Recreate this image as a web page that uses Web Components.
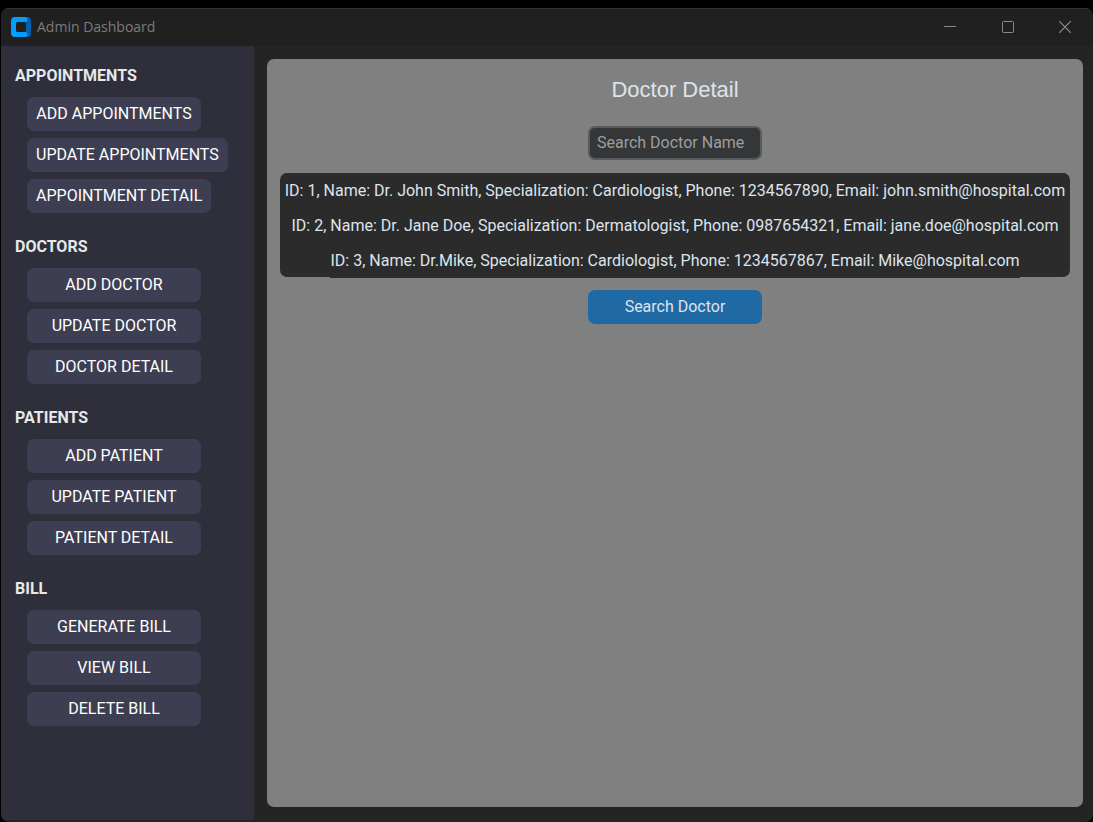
<!DOCTYPE html>
<html lang="en">
<head>
<meta charset="utf-8">
<title>Admin Dashboard</title>
<style>
  html, body { height: 100%; margin: 0; }
  body { background: #000; font-family: Roboto, "Liberation Sans", sans-serif; font-size: 16px; overflow: hidden; }
</style>
</head>
<body>
<app-window caption="Admin Dashboard">
  <side-bar slot="side">
    <nav-group heading="APPOINTMENTS">
      <nav-button>ADD APPOINTMENTS</nav-button>
      <nav-button>UPDATE APPOINTMENTS</nav-button>
      <nav-button>APPOINTMENT DETAIL</nav-button>
    </nav-group>
    <nav-group heading="DOCTORS">
      <nav-button>ADD DOCTOR</nav-button>
      <nav-button>UPDATE DOCTOR</nav-button>
      <nav-button>DOCTOR DETAIL</nav-button>
    </nav-group>
    <nav-group heading="PATIENTS">
      <nav-button>ADD PATIENT</nav-button>
      <nav-button>UPDATE PATIENT</nav-button>
      <nav-button>PATIENT DETAIL</nav-button>
    </nav-group>
    <nav-group heading="BILL">
      <nav-button>GENERATE BILL</nav-button>
      <nav-button>VIEW BILL</nav-button>
      <nav-button>DELETE BILL</nav-button>
    </nav-group>
  </side-bar>
  <doctor-panel>
    <doctor-row>ID: 1, Name: Dr. John Smith, Specialization: Cardiologist, Phone: 1234567890, Email: john.smith@hospital.com</doctor-row>
    <doctor-row>ID: 2, Name: Dr. Jane Doe, Specialization: Dermatologist, Phone: 0987654321, Email: jane.doe@hospital.com</doctor-row>
    <doctor-row>ID: 3, Name: Dr.Mike, Specialization: Cardiologist, Phone: 1234567867, Email: Mike@hospital.com</doctor-row>
  </doctor-panel>
</app-window>

<script>
class BaseElement extends HTMLElement {
  constructor() {
    super();
    this.attachShadow({ mode: "open" }).innerHTML = this.constructor.markup;
  }
}

customElements.define("app-window", class extends BaseElement {
  static markup = `
    <style>
      :host { display: block; box-sizing: border-box; height: 100vh; padding: 8px 0 0 1px; }
      .frame { box-sizing: border-box; height: 100%; display: flex; flex-direction: column; overflow: hidden;
        background: #242424; border-radius: 8px; }
      header { box-sizing: border-box; height: 38px; flex: none; display: flex; align-items: center;
        background: #202020; border-top: 1px solid #343434; padding: 0 0 1px 10px; }
      .logo { flex: none; margin-right: 6px; }
      h1 { flex: 1; margin: 0; font: 400 14px/20px "Open Sans", "Noto Sans", sans-serif; color: #7c7c7c; }
      .controls { display: flex; }
      button { width: 58px; height: 34px; padding: 0; border: 0; background: none; display: grid; place-items: center; }
      button svg { display: block; fill: none; stroke: #8b8b8b; }
      button:last-child { width: 56px; }
      main { flex: 1; min-height: 0; display: flex; }
    </style>
    <div class="frame">
      <header>
        <svg class="logo" width="20" height="20" viewBox="0 0 20 20" aria-hidden="true">
          <path d="M12 0H16Q20 0 20 4V16Q20 20 16 20H12Z" fill="#0560ae"/>
          <path d="M4 0H14.500Q16.500 0.500 16.500 2.500T14.500 5V15Q16.500 15.500 16.500 17.500T14.500 20H4Q0 20 0 16V4Q0 0 4 0Z" fill="#049dff"/>
          <rect x="5" y="5" width="10" height="10" rx="1.500" fill="#202020"/>
        </svg>
        <h1></h1>
        <div class="controls">
          <button type="button" aria-label="Minimize"><svg width="12" height="12"><path d="M0 5.500H12"/></svg></button>
          <button type="button" aria-label="Maximize"><svg width="12" height="12"><rect x=".5" y=".5" width="11" height="11" rx="1"/></svg></button>
          <button type="button" aria-label="Close"><svg width="12" height="12"><path d="M0 0L12 12M12 0L0 12" stroke-width="1.200"/></svg></button>
        </div>
      </header>
      <main><slot name="side"></slot><slot></slot></main>
    </div>`;
  connectedCallback() {
    this.shadowRoot.querySelector("h1").textContent = this.getAttribute("caption");
  }
});

customElements.define("side-bar", class extends BaseElement {
  static markup = `
    <style>
      :host { display: block; flex: none; width: 253px; margin-bottom: 2px; background: #2e2f3a; }
      nav { display: flex; flex-direction: column; gap: 17px; padding: 13px 12px 0 14px; }
    </style>
    <nav><slot></slot></nav>`;
});

customElements.define("nav-group", class extends BaseElement {
  static markup = `
    <style>
      :host { display: block; }
      h2 { margin: 0 0 4px; font: 700 16px/34px Roboto, "Liberation Sans", sans-serif; color: #e6e8ea; }
      .items { display: flex; flex-direction: column; align-items: flex-start; gap: 7px; padding-left: 12px; }
    </style>
    <section><h2></h2><div class="items"><slot></slot></div></section>`;
  connectedCallback() {
    this.shadowRoot.querySelector("h2").textContent = this.getAttribute("heading");
  }
});

customElements.define("nav-button", class extends BaseElement {
  static markup = `
    <style>
      :host { display: block; }
      button { display: block; min-width: 174px; height: 34px; padding: 0 9px; border: 0; border-radius: 7px;
        background: #3d3e52; color: #fff; font: inherit; line-height: 34px; white-space: nowrap; }
    </style>
    <button type="button"><slot></slot></button>`;
});

customElements.define("doctor-panel", class extends BaseElement {
  static markup = `
    <style>
      :host { flex: 1; min-width: 0; box-sizing: border-box; display: flex; flex-direction: column; align-items: center;
        margin: 13px 10px 15px 13px; padding: 13px; gap: 13px; background: #808080; border-radius: 7px; }
      h2 { margin: 0 0 6px; font: 400 22px/35px "Liberation Sans", sans-serif; color: #dce4ee; }
      input, button { box-sizing: border-box; width: 174px; height: 34px; border-radius: 7px; font: inherit; }
      input { padding: 0 7px 2px; border: 2px solid #565b5e; background: #343638; color: #dce4ee; }
      input::placeholder { color: #9e9e9e; opacity: 1; }
      button { padding: 0 0 2px; border: 0; background: #1f6aa5; color: #dce4ee; }
      .list { box-sizing: border-box; align-self: stretch; height: 104px; background: #2b2b2b; border-radius: 7px;
        display: flex; flex-direction: column; align-items: center; }
    </style>
    <h2>Doctor Detail</h2>
    <input type="text" placeholder="Search Doctor Name" aria-label="Search Doctor Name">
    <div class="list"><slot></slot></div>
    <button type="button">Search Doctor</button>`;
});

customElements.define("doctor-row", class extends BaseElement {
  static markup = `
    <style>
      :host { display: block; flex: none; height: 35px; line-height: 35px; white-space: nowrap; background: #2b2b2b; color: #dce4ee; }
    </style>
    <slot></slot>`;
});
</script>
</body>
</html>
